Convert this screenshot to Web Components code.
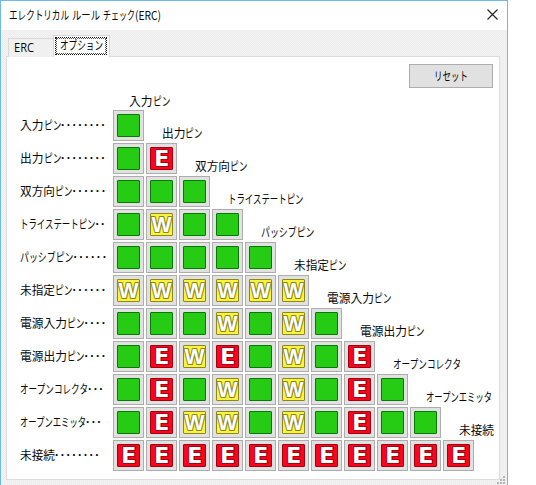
<!DOCTYPE html>
<html lang="ja">
<head>
<meta charset="utf-8">
<title>ERC</title>
<style>
body{margin:0;background:#fff;overflow:hidden;font-family:"Liberation Sans","Noto Sans CJK JP",sans-serif}
</style>
</head>
<body>
<erc-dialog></erc-dialog>
<script>
// Label made of runs "text:width", separated by "|"; each run is condensed to its width.
class UiLabel extends HTMLElement{
  connectedCallback(){
    const root=this.attachShadow({mode:'open'});
    root.innerHTML=`<style>:host{display:flex;flex:none;height:16px;font:12px/16px "Noto Sans CJK JP",sans-serif;color:#080808;white-space:pre}
      :host([latin]){font-family:"Open Sans","Noto Sans",sans-serif}
      .run{display:block;flex:none;height:16px}.run span{display:inline-block;transform-origin:0 50%}
      .dots{font:bold 12px/16px "Liberation Sans",sans-serif}</style>`+
      this.getAttribute('runs').split('|').map(r=>{
        const k=r.lastIndexOf(':'),t=r.slice(0,k),w=+r.slice(k+1);
        return `<div class="run ${t[0]==='·'?'dots':''}" data-w="${w}" style="width:${w}px"><span>${t}</span></div>`;
      }).join('');
    for(const run of root.querySelectorAll('.run')){
      const s=run.firstChild,w=+run.dataset.w,n=s.getBoundingClientRect().width;
      if(run.classList.contains('dots'))s.style.letterSpacing=(w-n)/s.textContent.length+'px';
      else if(n)s.style.transform=`scaleX(${w/n})`;
    }
  }
}
customElements.define('ui-label',UiLabel);

class PinButton extends HTMLElement{
  connectedCallback(){
    const s=this.getAttribute('state');
    const c={G:['#26cc14','#087808'],E:['#fb041c','#a00010'],W:['#fcf43c','#8c8820']}[s];
    const glyph=s==='E'?'<text x="11.8" y="18.8" textLength="15" lengthAdjust="spacingAndGlyphs" font-size="20.5" stroke="#a00818" stroke-width="2">E</text>'
      :s==='W'?'<text class="w" x="11.5" y="18.8" textLength="20" lengthAdjust="spacingAndGlyphs" font-size="22" stroke="#8a8420" stroke-width="2.2">W</text>':'';
    this.attachShadow({mode:'open'}).innerHTML=`<style>
      :host{display:grid;place-items:center;flex:none;box-sizing:border-box;width:31px;height:31px;border:1px solid #adadad;background:#e1e1e1}
      svg{display:block}
      text{font-family:"DejaVu Sans",sans-serif;font-weight:bold;fill:#fff;text-anchor:middle;paint-order:stroke;stroke-linejoin:round}
      .w{font-family:"Liberation Sans",sans-serif}</style>
      <svg width="23" height="23"><rect x=".5" y=".5" width="22" height="22" rx=".5" fill="${c[0]}" stroke="${c[1]}"/>${glyph}</svg>`;
  }
}
customElements.define('pin-button',PinButton);

class PinMatrix extends HTMLElement{
  connectedCallback(){
    const rows=[
      ['入力:23.5|ピン:17.5','········:46','G'],
      ['出力:23.5|ピン:17.5','········:46','GE'],
      ['双方向:35|ピン:17.5','······:35','GGG'],
      ['トライステートピン:75.5','··:11','GWGG'],
      ['パッシブピン:53.5','······:35','GGGGG'],
      ['未指定:35|ピン:17.5','······:35','WWWWWW'],
      ['電源入力:47|ピン:17.5','····:23','GGGWGWG'],
      ['電源出力:47|ピン:17.5','····:23','GEWEGWGE'],
      ['オープンコレクタ:68','···:17','GEGWGWGEG'],
      ['オープンエミッタ:66','···:17','GEWWGWGEGG'],
      ['未接続:35','········:46','EEEEEEEEEEE']];
    this.attachShadow({mode:'open'}).innerHTML=`<style>
      :host{display:grid;row-gap:2px}
      .first{margin:0 0 -1px 109px;height:16px}
      .row{display:flex;height:31px;gap:2px}
      .name{width:91px;padding-top:7px}
      .col{padding:15px 0 0 15.5px}</style>
      <ui-label class="first" runs="${rows[0][0]}"></ui-label>
      ${rows.map((r,i)=>`<div class="row"><ui-label class="name" runs="${r[0]}|${r[1]}"></ui-label>${
        [...r[2]].map(s=>`<pin-button state="${s}"></pin-button>`).join('')}${
        rows[i+1]?`<ui-label class="col" runs="${rows[i+1][0]}"></ui-label>`:''}</div>`).join('')}`;
  }
}
customElements.define('pin-matrix',PinMatrix);

class ErcDialog extends HTMLElement{
  connectedCallback(){
    this.attachShadow({mode:'open'}).innerHTML=`<style>
      :host{display:flex;flex-direction:column;box-sizing:border-box;position:relative;width:508px;height:485px;border:1px solid #6db9e8;border-bottom:0;
        background:conic-gradient(#ededed 25%,#f3f3f3 0 50%,#ededed 0 75%,#f3f3f3 0) 0 0/2px 2px}
      header{display:flex;justify-content:space-between;height:29px;background:#fff;padding:6px 9px 0 8px;box-sizing:border-box;flex:none}
      header svg{margin-top:2px}
      nav{display:flex;align-items:flex-end;height:27px;padding-left:7px;flex:none;box-sizing:border-box;z-index:1}
      .tab{box-sizing:border-box;border:1px solid #d9d9d9;border-bottom:0}
      .erc{width:46px;height:19px;padding:1px 0 0 5px;background:#f0f0f0;border-right:0}
      .opt{width:57px;height:22px;background:#fff;padding:1px 1px 0 1px;margin-left:-1px}
      .focus{box-sizing:border-box;width:52px;height:18px;margin-left:0;border:1px dotted #111;outline:1px dotted #555;outline-offset:-2px;padding:0 0 0 4px}
      .focus ui-label{margin-top:-1px}
      main{display:flex;flex-direction:column;box-sizing:border-box;width:494px;height:424px;margin:-1px 0 0 5px;border:1px solid #dcdcdc;background:#fff;flex:none;padding:7px 6px 0 13px}
      .reset{align-self:flex-end;display:flex;justify-content:center;box-sizing:border-box;width:84px;height:24px;border:1px solid #adadad;background:#e1e1e1;padding-top:3px}
      pin-matrix{margin-top:5px}
      .grip{position:absolute;right:2px;bottom:1px}</style>
      <header><ui-label runs="エレクトリカル:60| :3|ルール:28| :3|チェック:32|(ERC):26"></ui-label>
        <svg width="11" height="11"><path d="M.5.5l10 10M10.5.5l-10 10" stroke="#222" stroke-width="1.1"/></svg></header>
      <nav><div class="tab erc"><ui-label latin runs="ERC:20"></ui-label></div>
        <div class="tab opt"><div class="focus"><ui-label runs="オプション:43"></ui-label></div></div></nav>
      <main><div class="reset"><ui-label runs="リセット:34"></ui-label></div><pin-matrix></pin-matrix></main>
      <svg class="grip" width="8" height="8" fill="#b5b5b5"><path d="M6 0h2v2h-2zM3 3h2v2h-2zM6 3h2v2h-2zM0 6h2v2h-2zM3 6h2v2h-2zM6 6h2v2h-2z"/></svg>`;
  }
}
customElements.define('erc-dialog',ErcDialog);
</script>
</body>
</html>
